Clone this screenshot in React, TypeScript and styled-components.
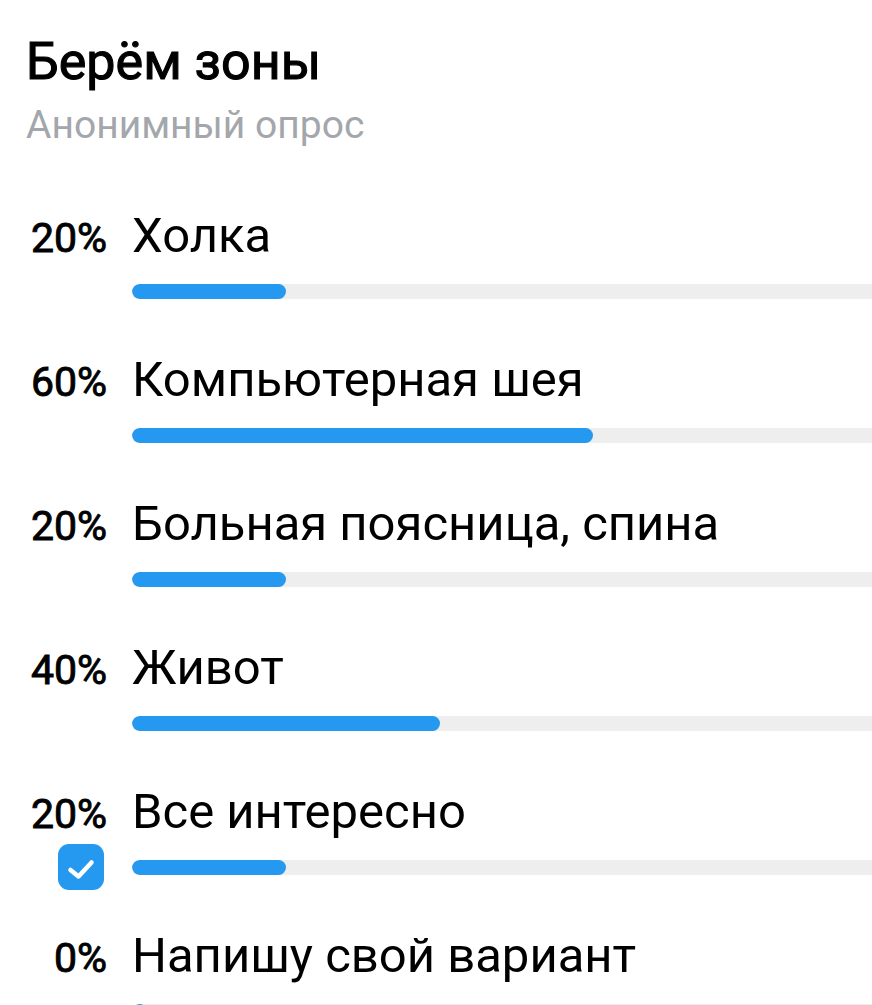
import React from 'react';
import styled, { createGlobalStyle } from 'styled-components';

const GlobalStyle = createGlobalStyle`
  html, body {
    margin: 0;
    padding: 0;
    background: #fff;
    overflow: hidden;
  }
  body {
    font-family: Roboto, "Noto Sans", "Liberation Sans", sans-serif;
    -webkit-font-smoothing: antialiased;
  }
`;

const Page = styled.div`
  width: 100vw;
  height: 100vh;
  overflow: hidden;
  padding: 31px 0 0 26px;
  box-sizing: border-box;
`;

/* medium weight: regular face thickened a little */
const Title = styled.h1`
  margin: 0;
  font-size: 52px;
  line-height: 62px;
  font-weight: 400;
  -webkit-text-stroke: 1.1px #000;
  color: #000;
`;

const Subtitle = styled.div`
  margin-top: 9px;
  font-size: 39px;
  line-height: 46px;
  color: #a3a7ac;
`;

const Options = styled.div`
  margin-top: 60px;
  display: flex;
  flex-direction: column;
`;

const Option = styled.div`
  display: grid;
  grid-template-columns: 81px 769px;
  grid-template-rows: 56px 46px;
  column-gap: 25px;
  row-gap: 4px;
  align-items: baseline;
  margin-bottom: 38px;
`;

const Percent = styled.div`
  font-size: 41px;
  line-height: 56px;
  font-weight: 400;
  -webkit-text-stroke: 0.9px #000;
  color: #000;
  text-align: right;
  white-space: nowrap;
`;

const Label = styled.div`
  font-size: 49px;
  line-height: 56px;
  color: #000;
  white-space: nowrap;
`;

const Mark = styled.div`
  align-self: stretch;
  display: flex;
  align-items: center;
  justify-content: flex-end;
  padding-right: 3px;
`;

const Checkbox = styled.div`
  width: 46px;
  height: 46px;
  border-radius: 11px;
  background: #2599ef;
  display: flex;
  align-items: center;
  justify-content: center;
`;

const Track = styled.div`
  align-self: center;
  height: 15px;
  border-radius: 8px;
  background: #eeeeee;
  overflow: hidden;
`;

const Fill = styled.div`
  height: 100%;
  min-width: 15px;
  border-radius: 8px;
  background: #2599ef;
`;

const options = [
  { pct: 20, text: 'Холка' },
  { pct: 60, text: 'Компьютерная шея' },
  { pct: 20, text: 'Больная поясница, спина' },
  { pct: 40, text: 'Живот' },
  { pct: 20, text: 'Все интересно', chosen: true },
  { pct: 0, text: 'Напишу свой вариант' },
];

const Check = () => (
  <svg width="46" height="46" viewBox="0 0 46 46">
    <path
      d="M12.5 26 L20.5 32.5 L33.5 18.5"
      fill="none"
      stroke="#fff"
      strokeWidth="4.5"
      strokeLinecap="round"
      strokeLinejoin="round"
    />
  </svg>
);

const App: React.FC = () => (
  <>
    <GlobalStyle />
    <Page>
      <Title>Берём зоны</Title>
      <Subtitle>Анонимный опрос</Subtitle>
      <Options>
        {options.map((o) => (
          <Option key={o.text}>
            <Percent>{o.pct}%</Percent>
            <Label>{o.text}</Label>
            <Mark>
              {o.chosen && (
                <Checkbox>
                  <Check />
                </Checkbox>
              )}
            </Mark>
            <Track>
              <Fill style={{ width: `${o.pct}%` }} />
            </Track>
          </Option>
        ))}
      </Options>
    </Page>
  </>
);

export default App;
